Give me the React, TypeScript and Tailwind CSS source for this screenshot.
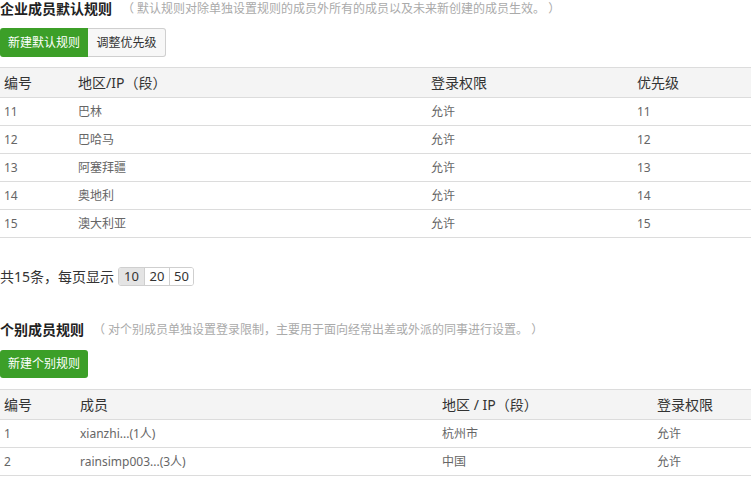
import React from "react";

const font = { fontFamily: '"Noto Sans", "Noto Sans CJK SC", sans-serif' };

const rows1 = [
  ["11", "巴林", "允许", "11"],
  ["12", "巴哈马", "允许", "12"],
  ["13", "阿塞拜疆", "允许", "13"],
  ["14", "奥地利", "允许", "14"],
  ["15", "澳大利亚", "允许", "15"],
];

const rows2 = [
  ["1", "xianzhi...(1人)", "杭州市", "允许"],
  ["2", "rainsimp003...(3人)", "中国", "允许"],
];

export default function App() {
  return (
    <div className="w-[751px] h-[482px] overflow-hidden bg-white text-[#333]" style={font}>
      {/* Section 1 */}
      <div className="flex items-center h-[18px]">
        <span className="text-[14px] font-bold text-[#222] leading-[18px]">企业成员默认规则</span>
        <span className="ml-[10px] text-[12px] text-[#aaa] leading-[18px]">
          （ 默认规则对除单独设置规则的成员外所有的成员以及未来新创建的成员生效。 ）
        </span>
      </div>
      <div className="mt-[10px] flex h-[29px]">
        <div className="w-[88px] h-full flex items-center justify-center bg-[#3c9f28] text-white text-[12px] rounded-l-[3px]">
          新建默认规则
        </div>
        <div className="w-[78px] h-full flex items-center justify-center bg-[#f7f7f7] border border-l-0 border-[#cfcfcf] text-[#333] text-[12px] rounded-r-[3px]">
          调整优先级
        </div>
      </div>
      <div className="mt-[10px]">
        <div className="grid grid-cols-[74px_353px_206px_1fr] h-[31px] bg-[#f4f4f4] border-t border-b border-[#dcdcdc] items-center text-[14px] text-[#333]">
          <div className="pl-[4px]">编号</div>
          <div className="pl-[4px]">地区/IP（段）</div>
          <div className="pl-[4px]">登录权限</div>
          <div className="pl-[4px]">优先级</div>
        </div>
        {rows1.map((r) => (
          <div key={r[0]} className="grid grid-cols-[74px_353px_206px_1fr] h-[28px] border-b border-[#dcdcdc] items-center text-[12px] text-[#666]">
            {r.map((c, i) => (
              <div key={i} className="pl-[4px]">{c}</div>
            ))}
          </div>
        ))}
      </div>
      <div className="mt-[29px] flex items-center h-[19px]">
        <span className="text-[14px] text-[#333]">共15条，每页显示</span>
        <div className="ml-[4px] flex h-[19px] border border-[#cfcfcf] rounded-[3px] text-[13px] text-[#333] overflow-hidden">
          <div className="w-[26px] flex items-center justify-center bg-[#e4e4e4] border-r border-[#cfcfcf]">10</div>
          <div className="w-[25px] flex items-center justify-center bg-white border-r border-[#cfcfcf]">20</div>
          <div className="w-[23px] flex items-center justify-center bg-white">50</div>
        </div>
      </div>

      {/* Section 2 */}
      <div className="mt-[35px] flex items-center h-[18px]">
        <span className="text-[14px] font-bold text-[#222] leading-[18px]">个别成员规则</span>
        <span className="ml-[9px] text-[12px] text-[#aaa] leading-[18px]">
          （ 对个别成员单独设置登录限制，主要用于面向经常出差或外派的同事进行设置。 ）
        </span>
      </div>
      <div className="mt-[11px] flex h-[28px]">
        <div className="w-[88px] h-full flex items-center justify-center bg-[#3c9f28] text-white text-[12px] rounded-[3px]">
          新建个别规则
        </div>
      </div>
      <div className="mt-[11px]">
        <div className="grid grid-cols-[76px_362px_215px_1fr] h-[31px] bg-[#f4f4f4] border-t border-b border-[#dcdcdc] items-center text-[14px] text-[#333]">
          <div className="pl-[4px]">编号</div>
          <div className="pl-[4px]">成员</div>
          <div className="pl-[4px]">地区 / IP（段）</div>
          <div className="pl-[4px]">登录权限</div>
        </div>
        {rows2.map((r) => (
          <div key={r[0]} className="grid grid-cols-[76px_362px_215px_1fr] h-[28px] border-b border-[#dcdcdc] items-center text-[12px] text-[#666]">
            {r.map((c, i) => (
              <div key={i} className="pl-[4px]">{c}</div>
            ))}
          </div>
        ))}
      </div>
    </div>
  );
}
